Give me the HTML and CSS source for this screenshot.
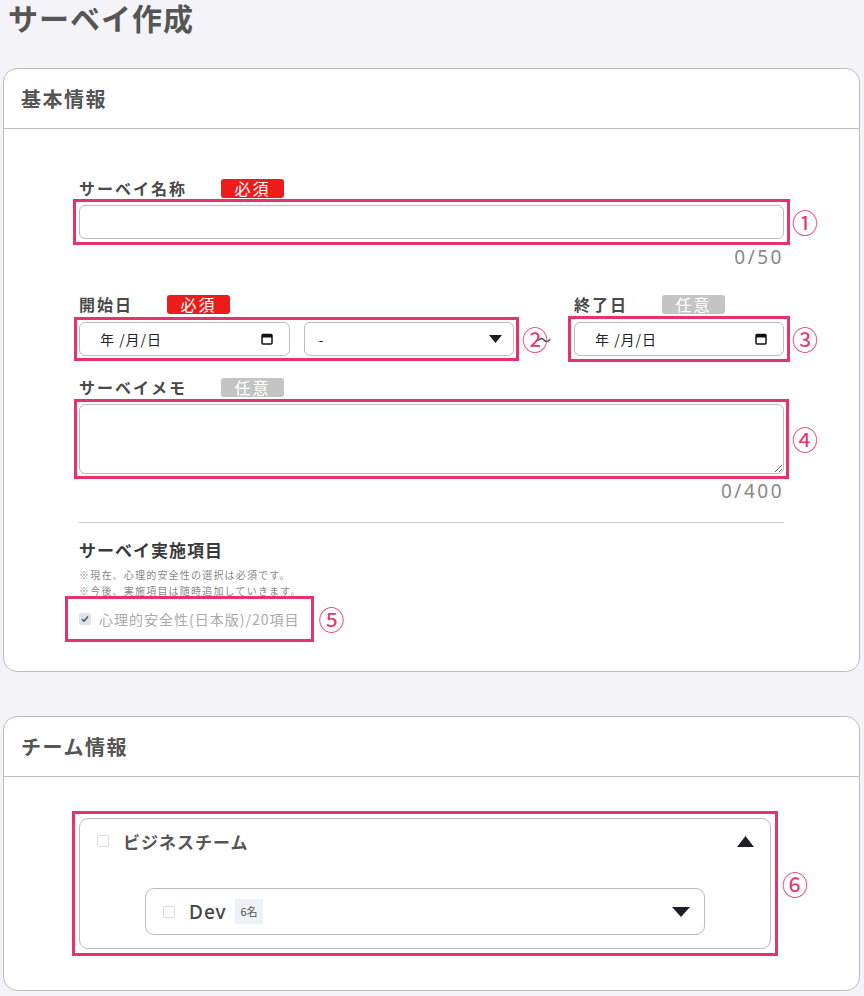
FILE: index.html
```html
<!DOCTYPE html>
<html lang="ja">
<head>
    <meta charset="UTF-8">
    <meta name="viewport" content="width=device-width, initial-scale=1.0">
    <title>サーベイ作成</title>
    <link rel="stylesheet" href="styles.css">
</head>
<body>
    <div class="page">
        <h1 class="page-title">サーベイ作成</h1>

        <section class="card">
            <h2 class="card-head">基本情報</h2>
            <div class="card-body">
                <div class="field-label">サーベイ名称<span class="tag tag-req">必須</span></div>
                <div class="annot annot-name">
                    <input class="text-input" type="text">
                    <span class="annot-no">①</span>
                </div>
                <div class="counter">0/50</div>

                <div class="date-row">
                    <div class="date-start">
                        <div class="field-label">開始日<span class="tag tag-req">必須</span></div>
                        <div class="annot annot-start">
                            <div class="fake-input date-input">
                                <span>年 /月/日</span>
                                <svg class="cal" width="12" height="12" viewBox="0 0 12 12"><rect x="1" y="1.5" width="10" height="9.5" rx="1" fill="none" stroke="#111" stroke-width="1.5"/><rect x="1" y="1.5" width="10" height="3" fill="#111"/></svg>
                            </div>
                            <div class="fake-input select-input">
                                <span>-</span>
                                <svg width="13" height="8" viewBox="0 0 13 8"><path d="M0 0h13L6.5 8z" fill="#1d1f27"/></svg>
                            </div>
                            <span class="annot-no">②</span>
                        </div>
                    </div>
                    <div class="date-sep">〜</div>
                    <div class="date-end">
                        <div class="field-label">終了日<span class="tag tag-opt">任意</span></div>
                        <div class="annot annot-end">
                            <div class="fake-input date-input">
                                <span>年 /月/日</span>
                                <svg class="cal" width="12" height="12" viewBox="0 0 12 12"><rect x="1" y="1.5" width="10" height="9.5" rx="1" fill="none" stroke="#111" stroke-width="1.5"/><rect x="1" y="1.5" width="10" height="3" fill="#111"/></svg>
                            </div>
                            <span class="annot-no">③</span>
                        </div>
                    </div>
                </div>

                <div class="field-label memo-label">サーベイメモ<span class="tag tag-opt">任意</span></div>
                <div class="annot annot-memo">
                    <textarea class="memo"></textarea>
                    <span class="annot-no">④</span>
                </div>
                <div class="counter counter-memo">0/400</div>

                <hr class="divider">

                <h3 class="section-title">サーベイ実施項目</h3>
                <p class="note">※現在、心理的安全性の選択は必須です。<br>※今後、実施項目は随時追加していきます。</p>
                <div class="annot annot-check">
                    <span class="box box-checked">
                        <svg width="10" height="10" viewBox="0 0 10 10"><path d="M2 5.2l2 2 4-4.6" fill="none" stroke="#4d5566" stroke-width="1.6"/></svg>
                    </span>
                    <span class="check-text">心理的安全性(日本版)/20項目</span>
                    <span class="annot-no">⑤</span>
                </div>
            </div>
        </section>

        <section class="card card-team">
            <h2 class="card-head">チーム情報</h2>
            <div class="card-body team-body">
                <div class="annot annot-team">
                    <div class="team">
                        <div class="team-head">
                            <span class="box"></span>
                            <span class="team-name">ビジネスチーム</span>
                            <svg class="tri" width="17" height="11" viewBox="0 0 17 11"><path d="M8.5 0L17 11H0z" fill="#1d1f27"/></svg>
                        </div>
                        <div class="sub-team">
                            <span class="box"></span>
                            <span class="sub-name">Dev</span>
                            <span class="count">6名</span>
                            <svg class="tri" width="18" height="10" viewBox="0 0 18 10"><path d="M0 0h18L9 10z" fill="#1d1f27"/></svg>
                        </div>
                    </div>
                    <span class="annot-no">⑥</span>
                </div>
            </div>
        </section>
    </div>
</body>
</html>
```

FILE: styles.css
```css
body {
    margin: 0;
    background-color: #f4f4f8;
    color: #4a4a4a;
    font-family: "Noto Sans CJK JP", "Noto Sans", sans-serif;
}
.page {
    padding: 0 4px 10px 3px;
}
.page-title {
    margin: 0;
    padding-left: 5px;
    font-size: 30px;
    line-height: 34px;
    letter-spacing: 1px;
    font-weight: bold;
    color: #555;
}
.card {
    margin-top: 34px;
    background-color: #fff;
    border: 1px solid #bdbdbd;
    border-radius: 14px;
}
.card-team {
    margin-top: 44px;
}
.card-head {
    margin: 0;
    height: 59px;
    line-height: 59px;
    padding-left: 17px;
    font-size: 20px;
    letter-spacing: 1.5px;
    font-weight: bold;
    color: #555;
    border-bottom: 1px solid #bdbdbd;
}
.card-body {
    padding: 49px 75px 42px 75px;
}
.field-label {
    display: flex;
    align-items: center;
    gap: 34px;
    height: 20px;
    font-size: 16px;
    letter-spacing: 2px;
    font-weight: bold;
    color: #4a4a4a;
    margin-bottom: 7px;
}
.tag {
    display: inline-flex;
    justify-content: center;
    align-items: center;
    width: 63px;
    height: 19px;
    border-radius: 3px;
    color: #fff;
    font-size: 16px;
    font-weight: normal;
    letter-spacing: 2px;
}
.tag-req {
    background-color: #ee1b1b;
}
.tag-opt {
    background-color: #c4c4c4;
}

/* annotation frames */
.annot {
    position: relative;
    outline: 3px solid #e5336c;
    outline-offset: 2px;
}
.annot-no {
    position: absolute;
    left: 100%;
    top: 50%;
    margin-left: 8px;
    transform: translateY(-50%);
    font-size: 26px;
    line-height: 26px;
    color: #e5336c;
    font-weight: normal;
    letter-spacing: 0;
}

.text-input,
.fake-input,
.memo {
    box-sizing: border-box;
    width: 100%;
    border: 1px solid #bbb;
    border-radius: 6px;
    background-color: #fff;
    margin: 0;
}
.text-input {
    display: block;
    height: 34px;
}
.annot-name {
    outline-offset: 3px;
}
.counter {
    margin-top: 8px;
    text-align: right;
    font-family: "Noto Sans", sans-serif;
    font-size: 19px;
    line-height: 20px;
    letter-spacing: 2.5px;
    color: #888;
}
.date-row {
    display: grid;
    grid-template-columns: 435px 1fr 210px;
    margin-top: 27px;
}
.date-row .field-label {
    margin-bottom: 8px;
}
.annot-start {
    display: grid;
    grid-template-columns: 1fr 1fr;
    gap: 14px;
}
.annot-end {
    outline-offset: 3px;
}
.fake-input {
    display: flex;
    align-items: center;
    justify-content: space-between;
    height: 34px;
    font-size: 14px;
    color: #222;
}
.date-input {
    padding: 0 16px 0 20px;
}
.date-input span {
    letter-spacing: 1px;
}
.select-input {
    padding: 0 11px 0 14px;
}
.date-sep {
    align-self: end;
    height: 34px;
    line-height: 34px;
    text-align: center;
    font-size: 14px;
    color: #333;
}
.memo-label {
    margin-top: 21px;
}
.memo {
    display: block;
    height: 70px;
    resize: vertical;
}
.counter-memo {
    margin-top: 7px;
}
.divider {
    margin: 21px 0 0;
    border: none;
    border-top: 1px solid #cfcfcf;
}
.section-title {
    margin: 17px 0 0;
    font-size: 17px;
    line-height: 20px;
    letter-spacing: 1px;
    color: #3a3a3a;
}
.note {
    margin: 7px 0 0;
    font-size: 10px;
    line-height: 16px;
    letter-spacing: 1.2px;
    color: #888;
}
.annot-check {
    display: inline-flex;
    align-items: center;
    gap: 8px;
    height: 18px;
    margin-top: 11px;
    outline-offset: 11px;
}
.annot-check .annot-no {
    margin-left: 19px;
}
.box {
    box-sizing: border-box;
    display: inline-flex;
    justify-content: center;
    align-items: center;
    width: 12px;
    height: 12px;
    border: 1px solid #dcdcdc;
    border-radius: 2px;
    background-color: #fff;
    flex-shrink: 0;
}
.box-checked {
    background-color: #dfe4ec;
    border-color: #dfe4ec;
}
.check-text {
    font-size: 14px;
    letter-spacing: 1px;
    color: #aaa;
}

/* team card */
.team-body {
    padding-top: 41px;
    padding-bottom: 41px;
}
.annot-team {
    margin-right: 13px;
    outline-offset: 4px;
}
.annot-team .annot-no {
    margin-left: 11px;
}
.team {
    border: 1px solid #bbb;
    border-radius: 9px;
    padding: 10px 16px 13px 17px;
}
.team-head {
    display: flex;
    align-items: center;
    height: 24px;
}
.team-name {
    margin-left: 14px;
    font-size: 17px;
    letter-spacing: 1px;
    font-weight: bold;
    color: #555;
}
.tri {
    margin-left: auto;
}
.sub-team {
    box-sizing: border-box;
    display: flex;
    align-items: center;
    height: 47px;
    margin: 35px 49px 0 48px;
    padding: 0 14px 0 17px;
    border: 1px solid #bbb;
    border-radius: 9px;
}
.sub-name {
    margin-left: 14px;
    font-family: "Noto Sans", sans-serif;
    font-size: 19px;
    font-weight: 500;
    letter-spacing: 1px;
    color: #444;
}
.count {
    margin-left: 9px;
    padding: 0 5px;
    height: 25px;
    line-height: 25px;
    font-size: 11px;
    background-color: #eef1f5;
    color: #555;
}
```
